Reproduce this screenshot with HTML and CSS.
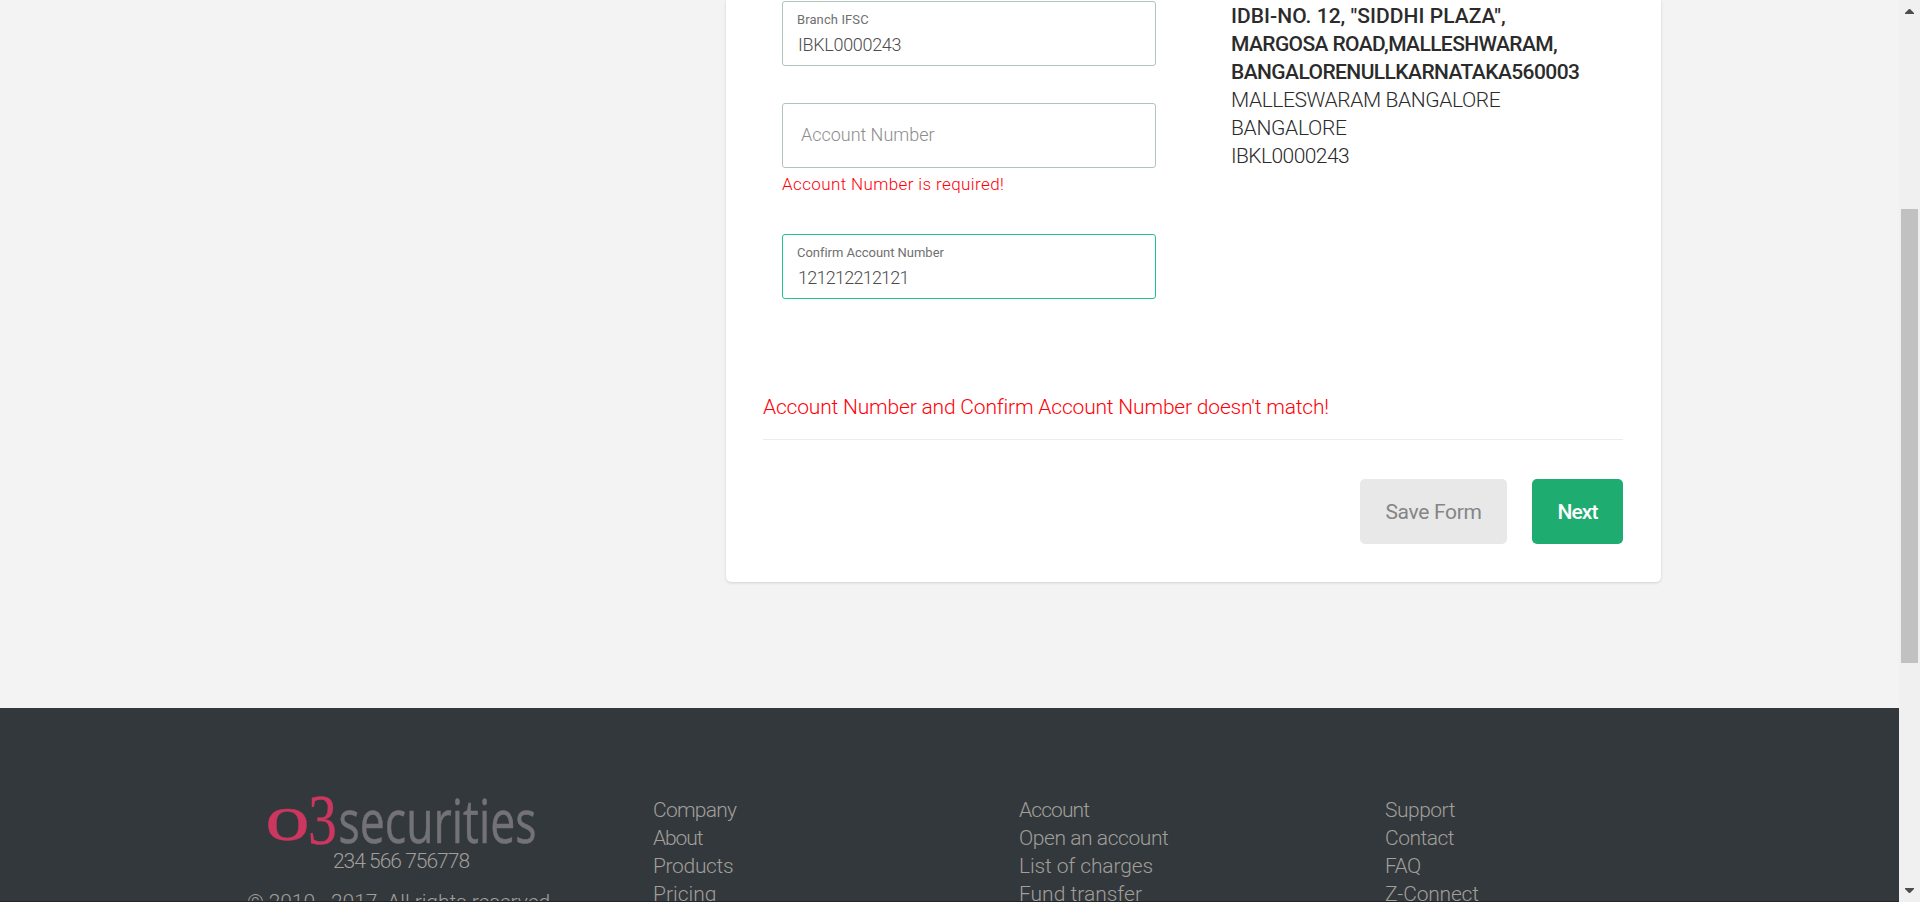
FILE: index.html
```html
<!DOCTYPE html>
<html lang="en">
<head>
<meta charset="utf-8">
<title>Bank details</title>
<link rel="stylesheet" href="styles.css">
</head>
<body>
<div class="page">
  <main class="main">
    <section class="card">
      <div class="columns">
        <form class="fields">
          <div class="field">
            <span class="label">Branch IFSC</span>
            <span class="value ifsc">IBKL0000243</span>
          </div>
          <div class="field empty"><span class="placeholder">Account Number</span></div>
          <div class="field-error">Account Number is required!</div>
          <div class="field active">
            <span class="label label-long">Confirm Account Number</span>
            <span class="value digits">121212212121</span>
          </div>
        </form>
        <address class="branch">
          <b class="street">IDBI-NO. 12, "SIDDHI PLAZA",</b>
          <b class="road">MARGOSA ROAD,MALLESHWARAM,</b>
          <b class="city">BANGALORENULLKARNATAKA560003</b>
          <span class="area">MALLESWARAM BANGALORE</span>
          <span class="town">BANGALORE</span>
          <span class="code">IBKL0000243</span>
        </address>
      </div>
      <p class="form-error">Account Number and Confirm Account Number doesn't match!</p>
      <div class="actions">
        <div class="btn save">Save Form</div>
        <div class="btn next">Next</div>
      </div>
    </section>
  </main>
  <footer class="footer">
    <div class="brand">
      <svg class="logo" width="270" height="50" viewBox="0 0 270 50">
        <g class="logo-mark">
          <text x="-1" y="44" font-size="66" textLength="45" lengthAdjust="spacingAndGlyphs">o</text>
          <text x="42" y="48" font-size="71" textLength="29" lengthAdjust="spacingAndGlyphs">3</text>
        </g>
        <text class="logo-name" x="72.500" y="47" font-size="60" textLength="198" lengthAdjust="spacingAndGlyphs">securities</text>
      </svg>
      <span class="phone">234 566 756778</span>
      <span class="copy">© 2010 - 2017. All rights reserved.</span>
    </div>
    <nav class="links">
      <a class="ls-7">Company</a><a class="ls-11">About</a><a class="ls-3">Products</a><a>Pricing</a>
    </nav>
    <nav class="links">
      <a class="ls-9">Account</a><a class="ls-4">Open an account</a><a class="ls-1">List of charges</a><a>Fund transfer</a>
    </nav>
    <nav class="links">
      <a class="ls-5">Support</a><a class="ls-5">Contact</a><a class="ls-5">FAQ</a><a class="ls-2">Z-Connect</a>
    </nav>
  </footer>
</div>
<aside class="scrollbar">
  <svg class="arrow" width="9" height="5" viewBox="0 0 9 5"><path d="M0 5V4L4 0H5L9 4V5Z"/></svg>
  <div class="thumb"></div>
  <svg class="arrow down" width="9" height="5" viewBox="0 0 9 5"><path d="M0 0H9V1L5 5H4L0 1Z"/></svg>
</aside>
</body>
</html>
```
FILE: styles.css
```css
* { box-sizing: border-box; }
body {
  margin: 0;
  display: flex;
  height: 902px;
  overflow: hidden;
  background: #f3f3f3;
  color: #2b2b2b;
  font: 300 21px/28px Roboto, "Liberation Sans", sans-serif;
}
.page { width: 1899px; height: 902px; overflow: hidden; }
.main { height: 708px; padding-left: 726px; }
.card {
  width: 935px;
  height: 582px;
  padding: 1px 38px 0 37px;
  background: #fff;
  border-radius: 0 0 5px 5px;
  box-shadow: 0 1px 3px rgba(0, 0, 0, .14);
}
.columns { display: flex; height: 391px; padding-left: 19px; }
.fields { width: 374px; margin-right: 75px; }
.field {
  display: flex;
  flex-direction: column;
  height: 65px;
  padding: 10px 14px 0;
  border: 1px solid #b0c4ba;
  border-radius: 3px;
}
.field.active { border-color: #1fc68c; margin-top: 35px; }
.field.empty { margin-top: 37px; padding: 19px 18px 0; }
.label { font-size: 13px; font-weight: 400; line-height: 16px; letter-spacing: .1px; color: #707070; }
.label-long { letter-spacing: -.03px; }
.value { font-size: 18px; line-height: 24px; margin-top: 5px; padding-left: 1px; font-weight: 300; color: #4c4c4c; }
.ifsc { letter-spacing: -.31px; }
.digits { letter-spacing: -.75px; }
.placeholder { font-size: 18px; line-height: 24px; letter-spacing: -.03px; color: #8c8c8c; }
.field-error { height: 31px; padding-top: 4px; font-size: 17px; line-height: 24px; letter-spacing: .386px; color: #ff0009; }
.branch { display: flex; flex-direction: column; padding-top: 1px; font-style: normal; white-space: nowrap; }
.branch b { font-weight: 500; }
.street { letter-spacing: .04px; }
.branch .road { letter-spacing: -.605px; }
.city { letter-spacing: -.578px; }
.area { letter-spacing: -.4px; }
.town { letter-spacing: -.3px; }
.code { letter-spacing: -.57px; }
.form-error {
  height: 48px;
  margin: 0;
  padding-top: 1px;
  border-bottom: 1px solid #ececec;
  color: #ff0009;
  letter-spacing: -.185px;
}
.actions { display: flex; justify-content: flex-end; gap: 25px; padding-top: 39px; }
.btn { height: 65px; border-radius: 5px; text-align: center; line-height: 66px; }
.save { width: 147px; background: #e8e8e8; color: #858585; font-weight: 400; letter-spacing: -.33px; }
.next { width: 91px; background: #1fac70; color: #fff; font-weight: 500; letter-spacing: -.9px; }
.footer {
  display: flex;
  height: 194px;
  padding: 88px 0 0 218px;
  background: #33383c;
  border-bottom: 1px solid #262528;
  color: #a09f9a;
  overflow: hidden;
}
.brand { display: flex; flex-direction: column; align-items: center; width: 366px; margin-right: 69px; white-space: nowrap; }
.logo { display: block; overflow: visible; }
.logo-mark { fill: #cb375f; stroke: #cb375f; stroke-width: .3px; font-family: "Liberation Serif", serif; }
.logo-name { fill: #737277; stroke: #737277; stroke-width: .5px; font-family: "Open Sans", sans-serif; font-weight: 400; }
.phone { margin-top: 1px; letter-spacing: -.99px; }
.copy { margin-top: 13px; letter-spacing: -.076px; }
.links { display: flex; flex-direction: column; width: 366px; white-space: nowrap; }
.ls-1 { letter-spacing: -.12px; }
.ls-2 { letter-spacing: -.2px; }
.ls-3 { letter-spacing: -.34px; }
.ls-4 { letter-spacing: -.43px; }
.ls-5 { letter-spacing: -.5px; }
.ls-7 { letter-spacing: -.75px; }
.ls-9 { letter-spacing: -.9px; }
.ls-11 { letter-spacing: -1.1px; }
.scrollbar { display: flex; flex-direction: column; width: 21px; height: 902px; padding: 9px 2px; background: #f0f0f0; }
.arrow { display: block; margin-left: 4px; fill: #4d4d4d; }
.thumb { width: 17px; height: 454px; margin-top: 195px; background: #c1c1c1; }
.arrow.down { margin-top: 225px; }
```
